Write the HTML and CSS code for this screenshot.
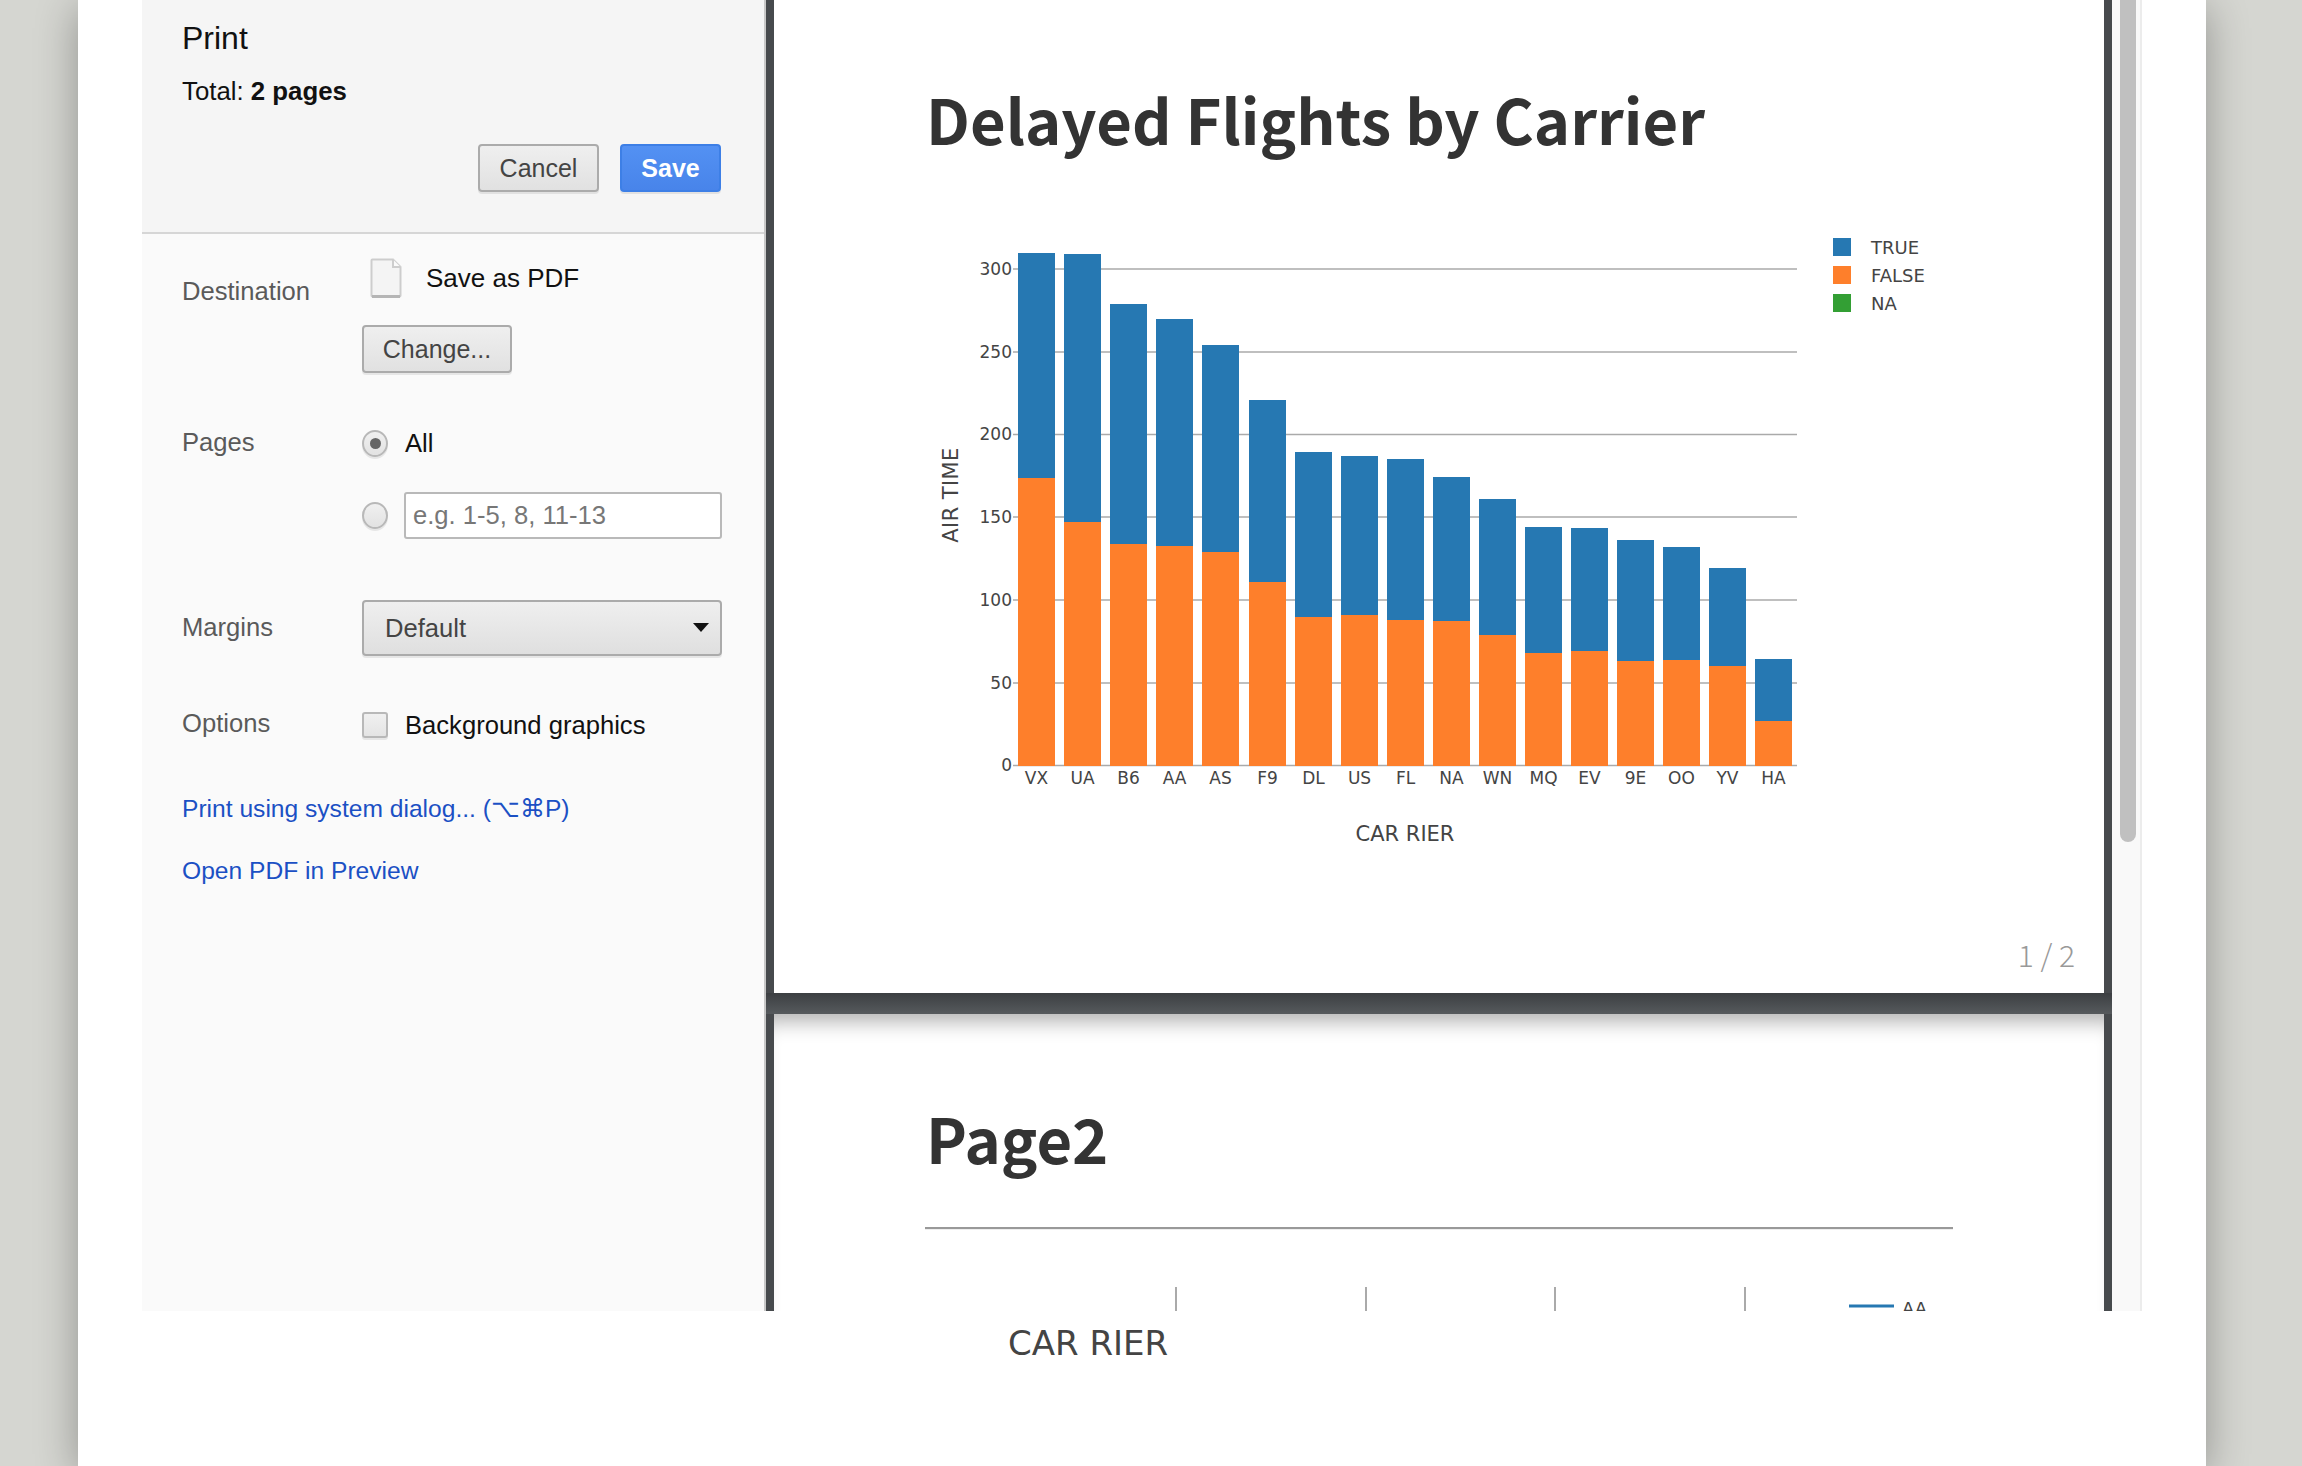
FILE: index.html
```html
<!DOCTYPE html>
<html lang="en">
<head>
<meta charset="utf-8">
<title>Print</title>
<link rel="stylesheet" href="styles.css">
</head>
<body>
<main class="card">
  <section class="dialog">
    <aside class="sidebar">
      <header class="side-head">
        <div class="print-title">Print</div>
        <div class="total">Total: <b>2 pages</b></div>
        <div class="head-actions">
          <button class="btn btn-cancel">Cancel</button>
          <button class="btn btn-save">Save</button>
        </div>
      </header>
      <div class="settings">
        <div class="row row-dest">
          <div class="label label-dest">Destination</div>
          <div class="value">
            <div class="dest-line">
              <svg class="doc-icon" viewBox="0 0 32 40" width="32" height="40">
                <path d="M1.500 2.500Q1.500 1.500 2.500 1.500H23L30.500 9V37.500Q30.500 38.500 29.500 38.500H2.500Q1.500 38.500 1.500 37.500Z" fill="#f4f4f4" stroke="#cdcdcd" stroke-width="2"/>
                <path d="M23 1.500V9H30.500" fill="#fafafa" stroke="#cdcdcd" stroke-width="2"/>
                <path d="M2 38.500H30" stroke="#b5b5b5" stroke-width="3"/>
              </svg>
              <span class="dark-text dest-name">Save as PDF</span>
            </div>
            <button class="btn btn-change">Change...</button>
          </div>
        </div>
        <div class="row row-pages">
          <div class="label">Pages</div>
          <div class="value">
            <div class="opt-line opt-all">
              <span class="radio radio-on"><span class="radio-dot"></span></span>
              <span class="dark-text">All</span>
            </div>
            <div class="opt-line opt-range">
              <span class="radio"></span>
              <span class="range-input">e.g. 1-5, 8, 11-13</span>
            </div>
          </div>
        </div>
        <div class="row row-margins">
          <div class="label label-margins">Margins</div>
          <div class="select"><span>Default</span><span class="caret"></span></div>
        </div>
        <div class="row row-options">
          <div class="label">Options</div>
          <div class="opt-line opt-bg">
            <span class="checkbox"></span>
            <span class="dark-text">Background graphics</span>
          </div>
        </div>
        <a class="link link-first">Print using system dialog... (⌥⌘P)</a>
        <a class="link link-second">Open PDF in Preview</a>
      </div>
    </aside>
    <div class="preview">
      <article class="page page-one">
        <h1 class="page-heading heading-one">Delayed Flights by Carrier</h1>
        <svg class="chart" viewBox="774 200 1330 660" width="1330" height="660">
          <g class="grid">
            <line x1="1013" x2="1797" y1="269" y2="269"/>
            <line x1="1013" x2="1797" y1="352" y2="352"/>
            <line x1="1013" x2="1797" y1="434.500" y2="434.500"/>
            <line x1="1013" x2="1797" y1="517" y2="517"/>
            <line x1="1013" x2="1797" y1="600" y2="600"/>
            <line x1="1013" x2="1797" y1="683" y2="683"/>
            <line x1="1013" x2="1797" y1="765.500" y2="765.500"/>
          </g>
          <g class="bars-true">
            <rect x="1018" y="253" width="37" height="513"/>
            <rect x="1064" y="254" width="37" height="512"/>
            <rect x="1110" y="304" width="37" height="462"/>
            <rect x="1156" y="319" width="37" height="447"/>
            <rect x="1202" y="345" width="37" height="421"/>
            <rect x="1249" y="400" width="37" height="366"/>
            <rect x="1295" y="452" width="37" height="314"/>
            <rect x="1341" y="456" width="37" height="310"/>
            <rect x="1387" y="459" width="37" height="307"/>
            <rect x="1433" y="477" width="37" height="289"/>
            <rect x="1479" y="499" width="37" height="267"/>
            <rect x="1525" y="527" width="37" height="239"/>
            <rect x="1571" y="528" width="37" height="238"/>
            <rect x="1617" y="540" width="37" height="226"/>
            <rect x="1663" y="547" width="37" height="219"/>
            <rect x="1709" y="568" width="37" height="198"/>
            <rect x="1755" y="659" width="37" height="107"/>
          </g>
          <g class="bars-false">
            <rect x="1018" y="478" width="37" height="288"/>
            <rect x="1064" y="522" width="37" height="244"/>
            <rect x="1110" y="544" width="37" height="222"/>
            <rect x="1156" y="546" width="37" height="220"/>
            <rect x="1202" y="552" width="37" height="214"/>
            <rect x="1249" y="582" width="37" height="184"/>
            <rect x="1295" y="617" width="37" height="149"/>
            <rect x="1341" y="615" width="37" height="151"/>
            <rect x="1387" y="620" width="37" height="146"/>
            <rect x="1433" y="621" width="37" height="145"/>
            <rect x="1479" y="635" width="37" height="131"/>
            <rect x="1525" y="653" width="37" height="113"/>
            <rect x="1571" y="651" width="37" height="115"/>
            <rect x="1617" y="661" width="37" height="105"/>
            <rect x="1663" y="660" width="37" height="106"/>
            <rect x="1709" y="666" width="37" height="100"/>
            <rect x="1755" y="721" width="37" height="45"/>
          </g>
          <g class="tick-y">
            <text x="1012" y="275">300</text>
            <text x="1012" y="358">250</text>
            <text x="1012" y="440">200</text>
            <text x="1012" y="523">150</text>
            <text x="1012" y="606">100</text>
            <text x="1012" y="689">50</text>
            <text x="1012" y="771">0</text>
          </g>
          <g class="tick-x">
            <text x="1036.500" y="784">VX</text>
            <text x="1082.500" y="784">UA</text>
            <text x="1128.500" y="784">B6</text>
            <text x="1174.500" y="784">AA</text>
            <text x="1220.500" y="784">AS</text>
            <text x="1267.500" y="784">F9</text>
            <text x="1313.500" y="784">DL</text>
            <text x="1359.500" y="784">US</text>
            <text x="1405.500" y="784">FL</text>
            <text x="1451.500" y="784">NA</text>
            <text x="1497.500" y="784">WN</text>
            <text x="1543.500" y="784">MQ</text>
            <text x="1589.500" y="784">EV</text>
            <text x="1635.500" y="784">9E</text>
            <text x="1681.500" y="784">OO</text>
            <text x="1727.500" y="784">YV</text>
            <text x="1773.500" y="784">HA</text>
          </g>
          <text class="axis-title axis-air" transform="translate(958 495) rotate(-90)">AIR TIME</text>
          <text class="axis-title" x="1405" y="841">CAR RIER</text>
          <g class="legend">
            <rect class="sw-true" x="1833" y="238" width="18" height="18"/>
            <rect class="sw-false" x="1833" y="266" width="18" height="18"/>
            <rect class="sw-na" x="1833" y="294" width="18" height="18"/>
            <text x="1871" y="254">TRUE</text>
            <text x="1871" y="282">FALSE</text>
            <text x="1871" y="310">NA</text>
          </g>
        </svg>
        <div class="page-number">1 / 2</div>
      </article>
      <div class="page-gap"></div>
      <article class="page page-two">
        <h1 class="page-heading heading-two">Page2</h1>
        <hr class="page-rule">
        <svg class="chart-two" viewBox="774 1280 1330 40" width="1330" height="40">
          <g class="ticks-two">
            <line x1="1176" x2="1176" y1="1287" y2="1320"/>
            <line x1="1366" x2="1366" y1="1287" y2="1320"/>
            <line x1="1555" x2="1555" y1="1287" y2="1320"/>
            <line x1="1745" x2="1745" y1="1287" y2="1320"/>
          </g>
          <line class="legend-line" x1="1849" x2="1894" y1="1306" y2="1306"/>
          <text class="legend-two" x="1902" y="1315">AA</text>
        </svg>
      </article>
    </div>
    <div class="scrolltrack"><div class="scrollthumb"></div></div>
  </section>
  <div class="caption">CAR RIER</div>
</main>
</body>
</html>
```
FILE: styles.css
```css
* { box-sizing: border-box; }
html, body { margin: 0; height: 100%; }
body {
  background: #d5d6d1;
  overflow: hidden;
  font-family: "Liberation Sans", Arial, sans-serif;
}
.card {
  width: 2128px;
  height: 1466px;
  margin-left: 78px;
  padding-left: 64px;
  background: #fff;
  box-shadow: 0 8px 40px rgba(0, 0, 0, .32);
}
.dialog {
  display: flex;
  width: 2000px;
  height: 1311px;
  overflow: hidden;
  background: #fff;
}
.sidebar {
  width: 624px;
  flex: none;
  background: #fafafa;
  border-right: 2px solid #c8c8c8;
  font-size: 25.600px;
  line-height: 30px;
}
.side-head {
  height: 234px;
  padding: 20px 43px 0 40px;
  background: #f5f5f5;
  border-bottom: 2px solid #d6d6d6;
}
.print-title { font-size: 32px; line-height: 36px; color: #111; }
.total { margin-top: 20px; font-size: 25.800px; color: #111; }
.head-actions { display: flex; justify-content: flex-end; gap: 21px; margin-top: 38px; }
.btn {
  height: 48px;
  padding: 0;
  border: 2px solid #ababab;
  border-radius: 4px;
  background: linear-gradient(#efefef, #e1e1e1);
  box-shadow: 0 2px 0 rgba(0, 0, 0, .08);
  font: 25px/30px "Liberation Sans", Arial, sans-serif;
  color: #444;
}
.btn-cancel { width: 121px; }
.btn-save {
  width: 101px;
  border-color: #3d7fe6;
  background: linear-gradient(#5391f3, #4884ea);
  color: #fff;
  font-weight: 700;
}
.btn-change { display: block; width: 150px; height: 48px; margin-top: 27px; }
.settings { padding: 24px 40px 0; }
.row { display: grid; grid-template-columns: 180px 360px; }
.label { color: #5a5a5a; }
.label-dest { padding-top: 18px; }
.label-margins { padding-top: 12px; }
.dark-text { font-size: 25.600px; color: #111; }
.dest-name { font-size: 26px; }
.dest-line { display: flex; align-items: center; gap: 24px; height: 40px; padding-left: 8px; }
.doc-icon { display: block; flex: none; }
.row-pages { margin-top: 52px; padding-top: 2px; }
.opt-line { display: flex; align-items: center; }
.opt-all { gap: 17px; height: 30px; margin-top: 1px; }
.opt-range { gap: 16px; height: 47px; margin-top: 34px; }
.radio {
  display: flex;
  align-items: center;
  justify-content: center;
  width: 26px;
  height: 27px;
  flex: none;
  border: 2px solid #b8b8b8;
  border-radius: 50%;
  background: linear-gradient(#f0f0f0, #e2e2e2);
  box-shadow: 0 2px 0 rgba(0, 0, 0, .08);
}
.radio-dot { width: 11px; height: 11px; border-radius: 50%; background: #666; }
.range-input {
  display: block;
  flex: 1;
  height: 47px;
  padding: 6px 7px;
  border: 2px solid #b9b9b9;
  border-radius: 3px;
  background: #fff;
  color: #777;
}
.row-margins { margin-top: 61px; }
.select {
  display: flex;
  align-items: center;
  justify-content: space-between;
  height: 56px;
  padding: 0 11px 0 21px;
  border: 2px solid #ababab;
  border-radius: 4px;
  background: linear-gradient(#efefef, #dfdfdf);
  box-shadow: 0 2px 0 rgba(0, 0, 0, .08);
  color: #444;
}
.caret {
  width: 0;
  height: 0;
  margin-bottom: 2px;
  border-left: 8px solid transparent;
  border-right: 8px solid transparent;
  border-top: 9px solid #111;
}
.row-options { margin-top: 52px; }
.opt-bg { gap: 17px; height: 30px; margin-top: 2px; }
.checkbox {
  width: 26px;
  height: 26px;
  flex: none;
  border: 2px solid #b8b8b8;
  border-radius: 3px;
  background: linear-gradient(#f0f0f0, #e4e4e4);
  box-shadow: 0 2px 0 rgba(0, 0, 0, .08);
}
.link { display: block; font-size: 24.600px; color: #1b50c4; }
.link-first { margin-top: 54px; }
.link-second { margin-top: 32px; }
.preview {
  display: flex;
  flex-direction: column;
  width: 1346px;
  flex: none;
  height: 1311px;
  padding: 0 8px;
  background: #474a4d;
}
.page { width: 1330px; background: #fff; flex: none; }
.page-one { display: flex; flex-direction: column; height: 993px; }
.page-heading {
  margin: 0;
  padding-left: 152px;
  font: 700 61.500px/88px "Noto Sans CJK SC", "Noto Sans", sans-serif;
  color: #333;
}
.heading-one { height: 200px; padding-top: 75px; }
.chart { display: block; flex: none; }
.grid line { stroke: #aaa; stroke-width: 1.500; }
.bars-true rect { fill: #2678b2; }
.bars-false rect { fill: #fe7f2b; }
.tick-y text, .tick-x text, .axis-title, .legend text {
  font-family: "DejaVu Sans", Verdana, sans-serif;
  fill: #444;
}
.tick-y text { font-size: 17px; text-anchor: end; }
.tick-x text { font-size: 17px; text-anchor: middle; }
.axis-title { font-size: 21px; text-anchor: middle; }
.axis-air { letter-spacing: .4px; }
.legend text { font-size: 18px; }
.sw-true { fill: #2678b2; }
.sw-false { fill: #fe7f2b; }
.sw-na { fill: #339f34; }
.page-number {
  align-self: flex-end;
  margin-top: auto;
  padding: 0 29px 19px 0;
  font: 300 30px/40px "Noto Sans CJK SC", "Noto Sans", sans-serif;
  color: #999;
}
.page-gap {
  height: 21px;
  flex: none;
  margin: 0 -8px;
  background: linear-gradient(#3c3f42, #565a5d);
}
.page-two {
  height: 297px;
  overflow: hidden;
  box-shadow: inset 0 22px 20px -14px rgba(0, 0, 0, .3);
}
.heading-two { padding-top: 80px; }
.page-rule {
  width: 1028px;
  height: 3px;
  margin: 45px 0 0 151px;
  border: 0;
  border-top: 2px solid #999;
  background: #eee;
}
.chart-two { display: block; margin-top: 50px; }
.ticks-two line { stroke: #aaa; stroke-width: 2; }
.legend-line { stroke: #2678b2; stroke-width: 3; }
.legend-two { font: 18px "DejaVu Sans", Verdana, sans-serif; fill: #444; }
.scrolltrack {
  width: 30px;
  flex: none;
  padding: 0 6px 0 8px;
  background: #f9f9f9;
  border-right: 2px solid #ececec;
}
.scrollthumb {
  width: 16px;
  height: 842px;
  border-radius: 0 0 8px 8px;
  background: #c0c0c0;
}
.caption {
  padding: 10px 0 0 866px;
  font: 34px/44px "DejaVu Sans", Verdana, sans-serif;
  color: #444;
}
```
